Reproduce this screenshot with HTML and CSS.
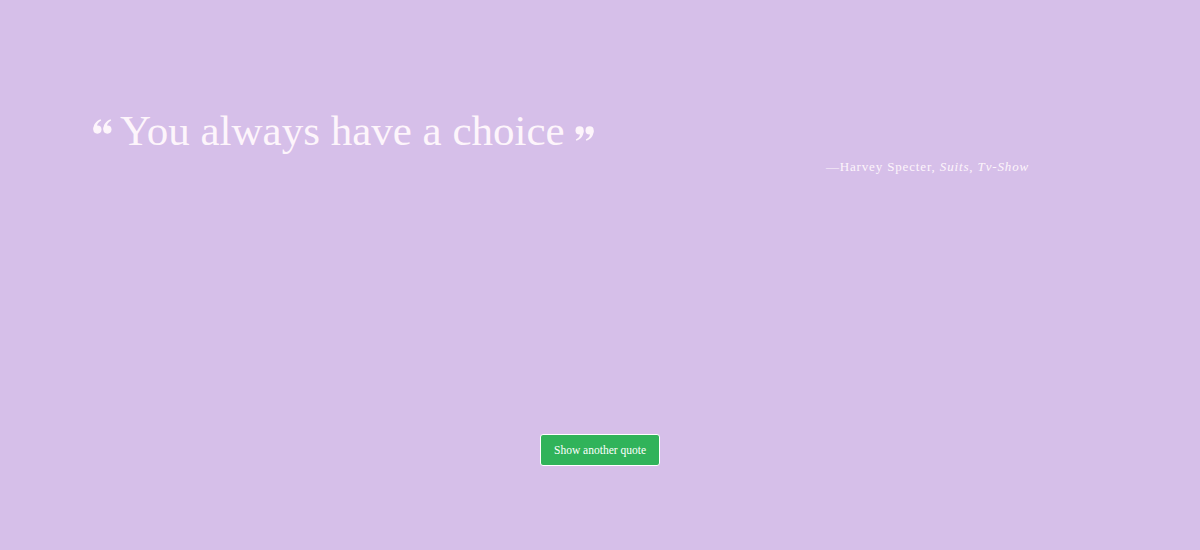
FILE: index.html
```html
<!DOCTYPE html>
<html>
<head>
<meta charset="utf-8">
<link rel="stylesheet" href="styles.css">
</head>
<body>
<main class="page">
  <section class="quote-box">
    <blockquote class="quote">
      <svg class="qmark qmark-left" width="19" height="15" viewBox="0 0 19 15" aria-hidden="true">
        <g fill="currentColor">
          <circle cx="4.4" cy="10.6" r="4.1"/>
          <path d="M0.4 10.8 C0.2 6 2.6 2 7.6 0.2 L8.2 1.4 C5.2 3 3.9 5 4 7.2 Z"/>
          <circle cx="14.4" cy="10.6" r="4.1"/>
          <path d="M10.4 10.8 C10.2 6 12.6 2 17.6 0.2 L18.2 1.4 C15.2 3 13.9 5 14 7.2 Z"/>
        </g>
      </svg><span class="quote-text">You always have a choice</span><svg class="qmark qmark-right" width="19" height="15" viewBox="0 0 19 15" aria-hidden="true">
        <g fill="currentColor" transform="rotate(180 9.5 7.5)">
          <circle cx="4.4" cy="10.6" r="4.1"/>
          <path d="M0.4 10.8 C0.2 6 2.6 2 7.6 0.2 L8.2 1.4 C5.2 3 3.9 5 4 7.2 Z"/>
          <circle cx="14.4" cy="10.6" r="4.1"/>
          <path d="M10.4 10.8 C10.2 6 12.6 2 17.6 0.2 L18.2 1.4 C15.2 3 13.9 5 14 7.2 Z"/>
        </g>
      </svg>
    </blockquote>
    <p class="author">&mdash;Harvey Specter, <em>Suits</em>, <em>Tv-Show</em></p>
  </section>
  <div class="actions">
    <button class="btn">Show another quote</button>
  </div>
</main>
</body>
</html>
```
FILE: styles.css
```css
html, body {
  margin: 0;
  padding: 0;
  height: 100%;
}
body {
  background: #d6bfe9;
  font-family: "Liberation Serif", serif;
  color: #fdf5fb;
}
.page {
  display: flex;
  flex-direction: column;
  height: 550px;
  box-sizing: border-box;
  padding: 104px 171px 0 93px;
}
.quote-box {
  display: flex;
  flex-direction: column;
}
.quote {
  margin: 0;
  display: flex;
  align-items: flex-start;
  line-height: 54px;
}
.quote-text {
  font-family: "Liberation Serif", serif;
  font-size: 43px;
  margin: 0 10px 0 8px;
}
.qmark {
  flex: none;
  color: #fdf5fb;
}
.qmark-left {
  margin-top: 15px;
}
.qmark-right {
  margin-top: 22px;
}
.author {
  align-self: flex-end;
  margin: 1px 0 0 0;
  font-family: "Liberation Serif", serif;
  font-size: 13px;
  letter-spacing: 0.85px;
}
.author em {
  font-style: italic;
}
.actions {
  display: flex;
  justify-content: center;
  margin-top: 259px;
  margin-left: -93px;
  margin-right: -171px;
}
.btn {
  background: #30b35a;
  color: #fff;
  border: 1px solid #fff;
  border-radius: 3px;
  width: 120px;
  height: 32px;
  font-family: "Liberation Serif", serif;
  font-size: 11.5px;
  padding: 0;
  cursor: pointer;
}
```
